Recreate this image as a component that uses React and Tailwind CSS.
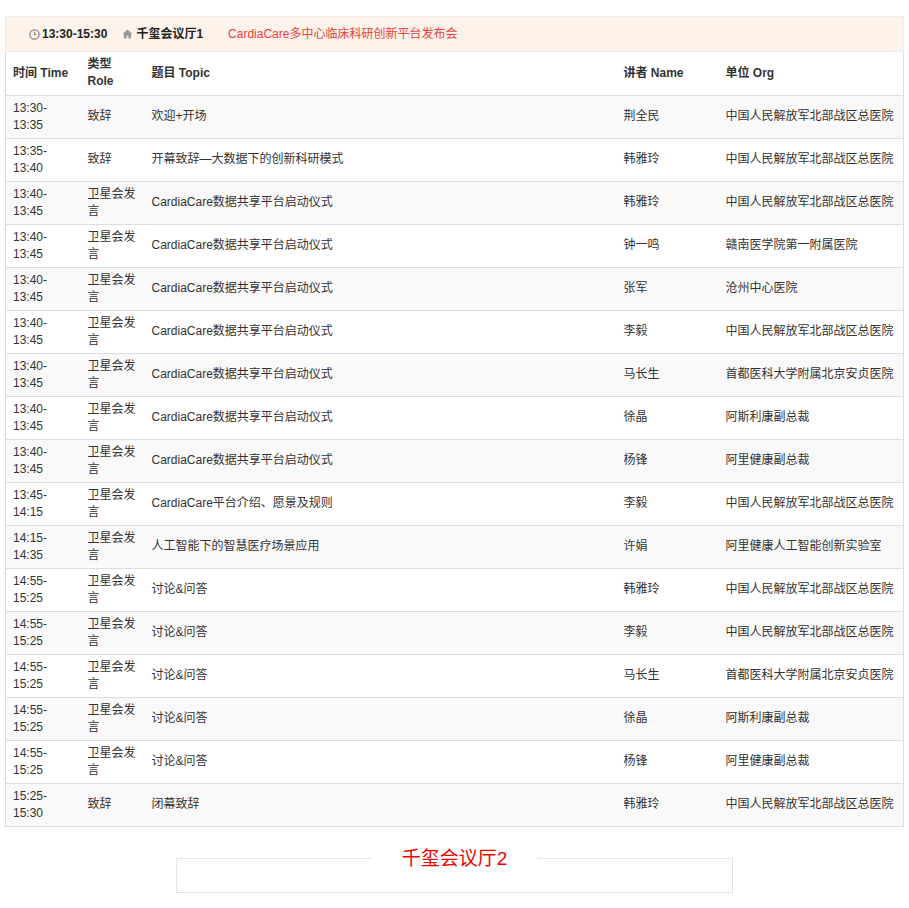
const rows = [
  ['13:30-13:35', '致辞', '欢迎+开场', '荆全民', '中国人民解放军北部战区总医院'],
  ['13:35-13:40', '致辞', '开幕致辞—大数据下的创新科研模式', '韩雅玲', '中国人民解放军北部战区总医院'],
  ['13:40-13:45', '卫星会发言', 'CardiaCare数据共享平台启动仪式', '韩雅玲', '中国人民解放军北部战区总医院'],
  ['13:40-13:45', '卫星会发言', 'CardiaCare数据共享平台启动仪式', '钟一鸣', '赣南医学院第一附属医院'],
  ['13:40-13:45', '卫星会发言', 'CardiaCare数据共享平台启动仪式', '张军', '沧州中心医院'],
  ['13:40-13:45', '卫星会发言', 'CardiaCare数据共享平台启动仪式', '李毅', '中国人民解放军北部战区总医院'],
  ['13:40-13:45', '卫星会发言', 'CardiaCare数据共享平台启动仪式', '马长生', '首都医科大学附属北京安贞医院'],
  ['13:40-13:45', '卫星会发言', 'CardiaCare数据共享平台启动仪式', '徐晶', '阿斯利康副总裁'],
  ['13:40-13:45', '卫星会发言', 'CardiaCare数据共享平台启动仪式', '杨锋', '阿里健康副总裁'],
  ['13:45-14:15', '卫星会发言', 'CardiaCare平台介绍、愿景及规则', '李毅', '中国人民解放军北部战区总医院'],
  ['14:15-14:35', '卫星会发言', '人工智能下的智慧医疗场景应用', '许娟', '阿里健康人工智能创新实验室'],
  ['14:55-15:25', '卫星会发言', '讨论&问答', '韩雅玲', '中国人民解放军北部战区总医院'],
  ['14:55-15:25', '卫星会发言', '讨论&问答', '李毅', '中国人民解放军北部战区总医院'],
  ['14:55-15:25', '卫星会发言', '讨论&问答', '马长生', '首都医科大学附属北京安贞医院'],
  ['14:55-15:25', '卫星会发言', '讨论&问答', '徐晶', '阿斯利康副总裁'],
  ['14:55-15:25', '卫星会发言', '讨论&问答', '杨锋', '阿里健康副总裁'],
  ['15:25-15:30', '致辞', '闭幕致辞', '韩雅玲', '中国人民解放军北部战区总医院'],
];

const font = { fontFamily: '"Liberation Sans", "Noto Sans CJK SC", sans-serif' };

export default function App() {
  return (
    <div className="bg-white px-[5px] pt-4 pb-4 text-[12px] text-[#333]" style={font}>
      <div className="flex items-center h-[36px] bg-[#fdf3ea] border border-[#eee] pl-[23px] text-[12px]">
        <span className="flex items-center gap-[2px] font-bold text-[#222]">
          <svg width="11" height="11" viewBox="0 0 12 12" className="text-[#888]">
            <circle cx="6" cy="6" r="5" fill="none" stroke="currentColor" strokeWidth="1.4" />
            <path d="M6 3v3.2h2.2" fill="none" stroke="currentColor" strokeWidth="1.2" />
          </svg>
          13:30-15:30
        </span>
        <span className="flex items-center gap-[3px] font-bold text-[#222] ml-[15px]">
          <svg width="11" height="10" viewBox="0 0 12 11" className="text-[#999]">
            <path d="M6 0.5L0.5 5.5h1.6V10.5h3V7.5h1.8v3h3V5.5h1.6z" fill="currentColor" />
          </svg>
          千玺会议厅1
        </span>
        <span className="ml-[25px] text-[#e8403d]">CardiaCare多中心临床科研创新平台发布会</span>
      </div>
      <table className="w-full border-collapse table-fixed border-x border-b border-[#ddd]">
        <colgroup>
          <col className="w-[75px]" />
          <col className="w-[64px]" />
          <col />
          <col className="w-[102px]" />
          <col className="w-[185px]" />
        </colgroup>
        <thead>
          <tr className="h-[43px] font-bold text-[#333]">
            <th className="text-left font-bold px-[7px] leading-[17px]">时间 Time</th>
            <th className="text-left font-bold px-[7px] leading-[17px]">类型<br />Role</th>
            <th className="text-left font-bold px-[7px] leading-[17px]">题目 Topic</th>
            <th className="text-left font-bold px-[7px] leading-[17px]">讲者 Name</th>
            <th className="text-left font-bold px-[7px] leading-[17px]">单位 Org</th>
          </tr>
        </thead>
        <tbody>
          {rows.map((r, i) => (
            <tr key={i} className={`h-[43px] border-t border-[#ddd] ${i % 2 === 0 ? 'bg-[#f9f9f9]' : 'bg-white'}`}>
              <td className="px-[7px] leading-[17px]">{r[0].split('-')[0]}-<br />{r[0].split('-')[1]}</td>
              <td className="px-[7px] leading-[17px] break-all">{r[1]}</td>
              <td className="px-[7px] leading-[17px]">{r[2]}</td>
              <td className="px-[7px] leading-[17px]">{r[3]}</td>
              <td className="px-[7px] leading-[17px] whitespace-nowrap">{r[4]}</td>
            </tr>
          ))}
        </tbody>
      </table>
      <div className="flex justify-center mt-[22px]">
        <fieldset className="w-[557px] h-[44px] border border-dotted border-[#ccc]">
          <legend className="mx-auto px-[30px] text-[19px] text-[#e00] leading-[20px]">千玺会议厅2</legend>
        </fieldset>
      </div>
    </div>
  );
}
